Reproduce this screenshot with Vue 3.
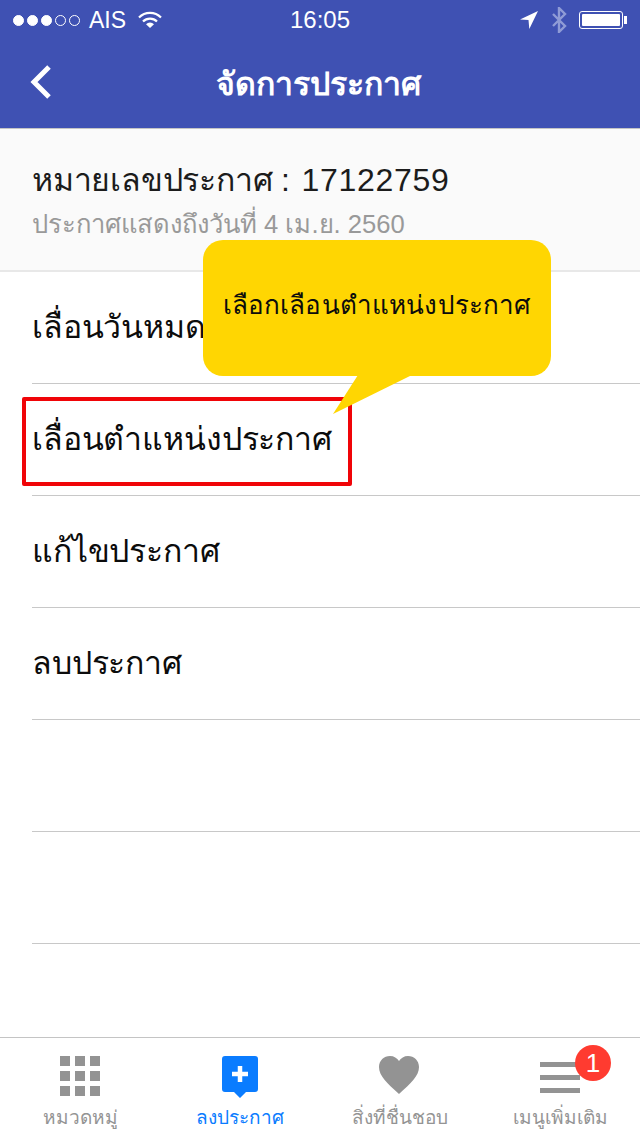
<template>
  <div class="screen">
    <header class="topbar">
      <div class="status">
        <div class="status-left">
          <span class="dots">
            <i v-for="n in 5" :key="n" class="dot" :class="{ on: n <= 3 }"></i>
          </span>
          <span class="carrier">AIS</span>
          <svg class="wifi" width="24" height="18" viewBox="0 0 24 18">
            <path d="M1 6.500a15.500 15.500 0 0 1 22 0" fill="none" stroke="#fff" stroke-width="2.200" />
            <path d="M5 10.500a9.800 9.800 0 0 1 14 0" fill="none" stroke="#fff" stroke-width="2.200" />
            <path d="M8 13.200a5.600 5.600 0 0 1 8 0L12 17z" fill="#fff" />
          </svg>
        </div>
        <span class="time">16:05</span>
        <div class="status-right">
          <svg width="20" height="20" viewBox="0 0 20 20">
            <path d="M19 1 1 9.500l8.500.6.8 8.900z" fill="#fff" />
          </svg>
          <svg width="16" height="26" viewBox="0 0 16 26">
            <path d="M2 7l12 12-6 6V1l6 6L2 19" fill="none" stroke="#8f9bd6" stroke-width="2.400" />
          </svg>
          <span class="battery"><span class="level"></span></span>
        </div>
      </div>
      <div class="navbar">
        <svg class="back" width="24" height="36" viewBox="0 0 24 36">
          <path d="M20 3 5 18l15 15" fill="none" stroke="#fff" stroke-width="5" />
        </svg>
        <h1>จัดการประกาศ</h1>
      </div>
    </header>

    <section class="info">
      <p class="number">หมายเลขประกาศ : <span class="digits">17122759</span></p>
      <p class="until">ประกาศแสดงถึงวันที่ 4 เม.ย. 2560</p>
    </section>

    <ul class="menu">
      <li v-for="(row, i) in rows" :key="i" class="row">
        <span>{{ row }}</span>
      </li>
      <div class="highlight"></div>
      <div class="bubble">
        เลือกเลือนตำแหน่งประกาศ
        <svg class="tail" width="82" height="42" viewBox="0 0 82 42">
          <path d="M25 0 0 39 79 0z" fill="#ffd602" />
        </svg>
      </div>
    </ul>

    <nav class="tabs">
      <div class="tab">
        <span class="grid">
          <i v-for="n in 9" :key="n"></i>
        </span>
        <span class="label">หมวดหมู่</span>
      </div>
      <div class="tab active">
        <svg width="36" height="42" viewBox="0 0 36 42">
          <path d="M3 0h30a3 3 0 0 1 3 3v30a3 3 0 0 1-3 3h-9l-6 6-6-6H3a3 3 0 0 1-3-3V3a3 3 0 0 1 3-3z" fill="#0a7cff" />
          <path d="M18 10v16M10 18h16" stroke="#fff" stroke-width="4.500" />
        </svg>
        <span class="label">ลงประกาศ</span>
      </div>
      <div class="tab">
        <svg class="heart" width="40" height="38" viewBox="0 0 40 38">
          <path d="M20 38C8 27 0 20 0 11 0 4.500 5 0 11 0c4 0 7 2 9 5 2-3 5-5 9-5 6 0 11 4.500 11 11 0 9-8 16-20 27z" fill="#939393" />
        </svg>
        <span class="label">สิ่งที่ชื่นชอบ</span>
      </div>
      <div class="tab">
        <span class="burger"><i></i><i></i><i></i></span>
        <span class="label">เมนูเพิ่มเติม</span>
        <span class="badge">1</span>
      </div>
    </nav>
  </div>
</template>

<script setup>
const rows = [
  "เลื่อนวันหมดอายุ",
  "เลื่อนตำแหน่งประกาศ",
  "แก้ไขประกาศ",
  "ลบประกาศ",
  "",
  "",
];
</script>

<style>
body {
  margin: 0;
  background: #fff;
}
</style>

<style scoped>
.screen {
  width: 640px;
  height: 1136px;
  display: flex;
  flex-direction: column;
  overflow: hidden;
  font-family: "Liberation Sans", "Noto Sans", "Open Sans", sans-serif;
  color: #1c1c1c;
  background: #fff;
}
.topbar {
  height: 129px;
  flex: none;
  background: #3f51b3;
  color: #fff;
  border-bottom: 1px solid #c4c4c4;
  box-sizing: border-box;
}
.status {
  height: 40px;
  display: flex;
  align-items: center;
  justify-content: space-between;
  position: relative;
  padding: 0 14px 0 13px;
  font-size: 24px;
}
.status-left,
.status-right {
  display: flex;
  align-items: center;
}
.dots {
  display: flex;
  gap: 3px;
}
.dot {
  width: 11px;
  height: 11px;
  border-radius: 50%;
  border: 1px solid #fff;
  box-sizing: border-box;
}
.dot.on {
  background: #fff;
}
.carrier {
  margin-left: 9px;
  font-size: 23px;
}
.wifi {
  margin-left: 12px;
}
.time {
  position: absolute;
  left: 0;
  right: 0;
  text-align: center;
}
.status-right {
  gap: 12px;
}
.battery {
  width: 44px;
  height: 18px;
  border: 1px solid #fff;
  border-radius: 3px;
  padding: 2px;
  box-sizing: border-box;
  display: flex;
  position: relative;
  margin-right: 3px;
}
.battery::after {
  content: "";
  position: absolute;
  right: -5px;
  top: 4px;
  width: 3px;
  height: 8px;
  background: #fff;
}
.level {
  flex: 1;
  background: #fff;
  border-radius: 1px;
}
.navbar {
  height: 87px;
  display: flex;
  align-items: center;
  justify-content: center;
  position: relative;
}
.back {
  position: absolute;
  left: 29px;
  top: 24px;
}
.navbar h1 {
  margin: 0 4px 0 0;
  font-size: 32px;
  font-weight: 700;
}
.info {
  height: 143px;
  flex: none;
  box-sizing: border-box;
  padding: 29px 32px 0;
  background: #fafafa;
  border-bottom: 2px solid #e8e8e8;
}
.info p {
  margin: 0;
}
.number {
  font-size: 32px;
  line-height: 44px;
  letter-spacing: -0.2px;
}
.digits {
  margin-left: 3px;
  letter-spacing: 0.7px;
}
.until {
  font-size: 25.600px;
  line-height: 44px;
  color: #999;
}
.menu {
  list-style: none;
  margin: 0;
  padding: 0;
  position: relative;
  flex: 1;
}
.row {
  height: 112px;
  box-sizing: border-box;
  margin-left: 32px;
  border-bottom: 1px solid #c8c8c8;
  display: flex;
  align-items: center;
  font-size: 32px;
  letter-spacing: -0.15px;
  color: #0c0c0c;
  padding-bottom: 2px;
}
.highlight {
  position: absolute;
  left: 22px;
  top: 125px;
  width: 330px;
  height: 89px;
  box-sizing: border-box;
  border: 4px solid #f00408;
  border-radius: 2px;
}
.bubble {
  position: absolute;
  left: 203px;
  top: -32px;
  width: 348px;
  height: 136px;
  box-sizing: border-box;
  padding-top: 47px;
  text-align: center;
  background: #ffd602;
  border-radius: 20px;
  color: #0c0c0c;
  font-size: 26px;
  letter-spacing: 0.15px;
  line-height: 36px;
}
.tail {
  position: absolute;
  left: 130px;
  top: 135px;
}
.tabs {
  height: 99px;
  flex: none;
  box-sizing: border-box;
  border-top: 1px solid #c4c4c4;
  display: grid;
  grid-template-columns: repeat(4, 1fr);
  background: #fff;
}
.tab {
  position: relative;
  display: flex;
  flex-direction: column;
  align-items: center;
  padding-top: 18px;
}
.tab svg,
.grid,
.burger {
  height: 42px;
  flex: none;
}
.tab .heart {
  height: 38px;
  margin-bottom: 4px;
  margin-left: -2px;
}
.label {
  margin-top: 5px;
  font-size: 19px;
  line-height: 30px;
  color: #949494;
  white-space: nowrap;
}
.active .label {
  color: #0a7cff;
}
.grid {
  width: 40px;
  display: grid;
  grid-template-columns: repeat(3, 10px);
  grid-auto-rows: 10px;
  gap: 5px;
}
.grid i {
  background: #939393;
}
.burger {
  width: 40px;
  display: flex;
  flex-direction: column;
  gap: 8px;
  padding-top: 6px;
  box-sizing: border-box;
}
.burger i {
  height: 5px;
  background: #939393;
}
.badge {
  position: absolute;
  left: 95px;
  top: 7px;
  width: 36px;
  height: 36px;
  border-radius: 50%;
  background: #ff3b30;
  color: #fff;
  text-align: center;
  font-size: 26px;
  line-height: 36px;
}
</style>
